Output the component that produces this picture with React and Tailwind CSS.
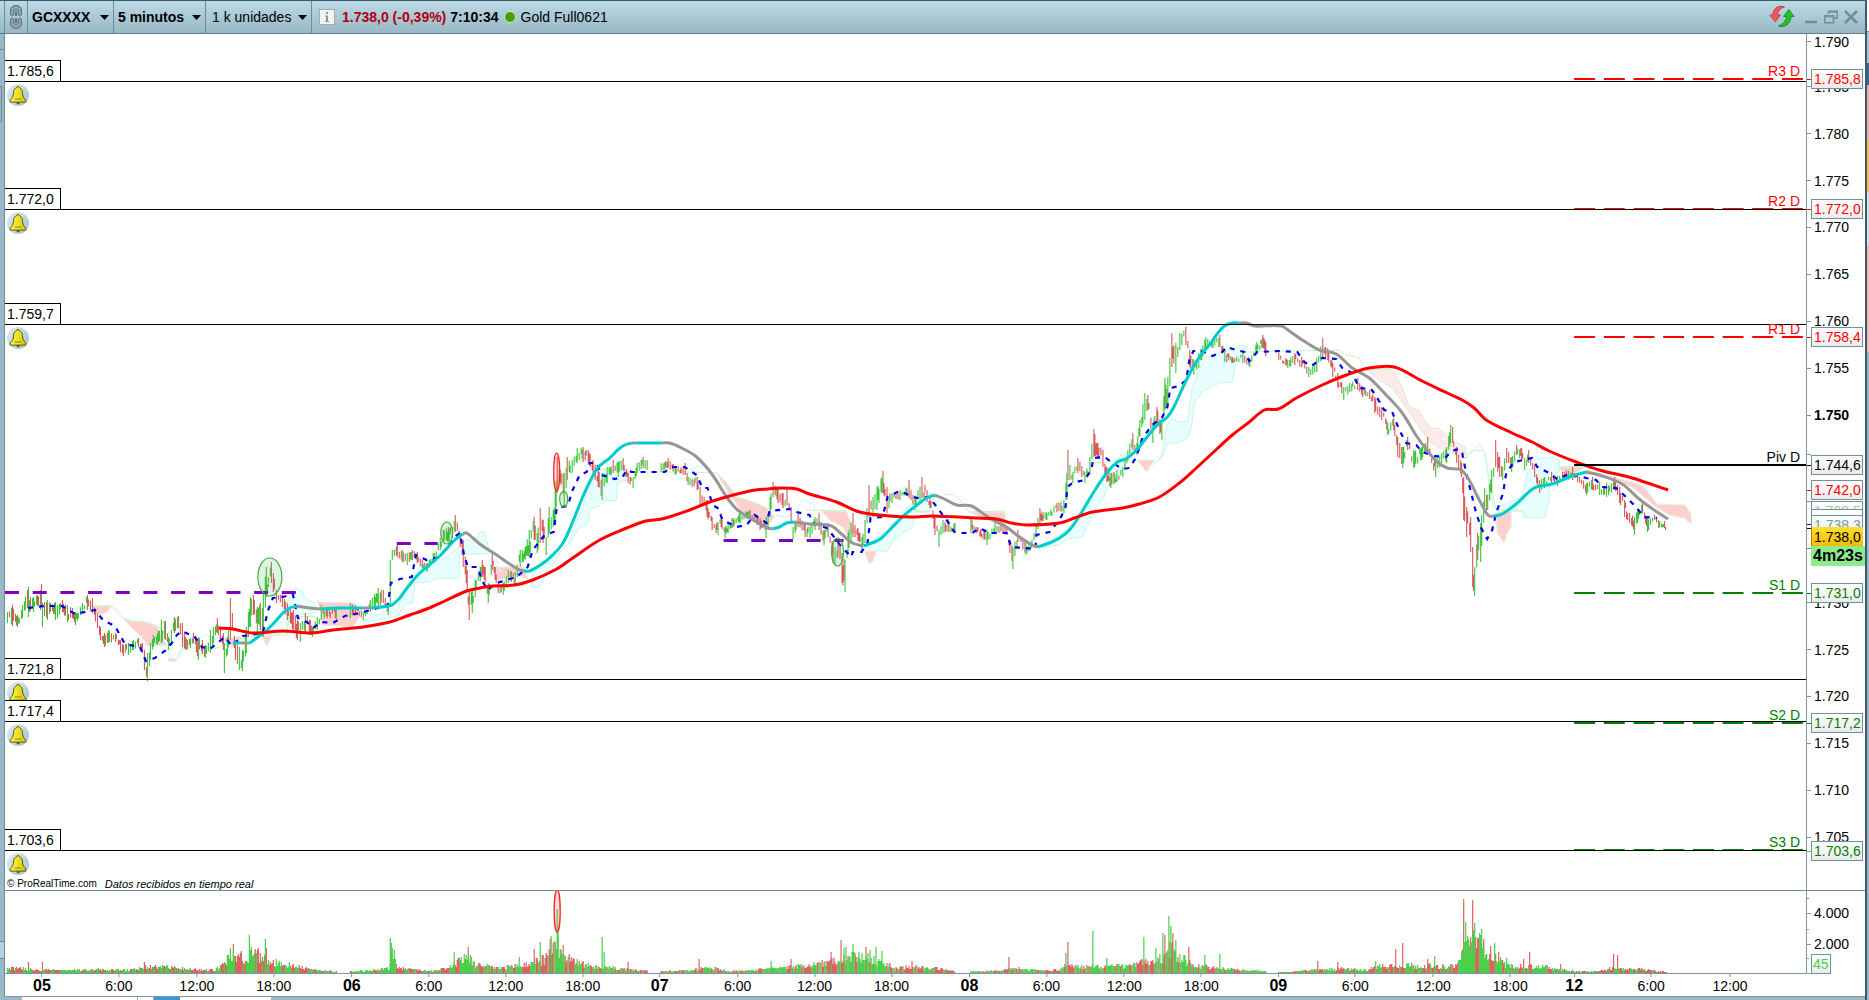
import { useMemo } from "react";
import clsx from "clsx";

// plot area in chart units
const LEFT = 5;
const RIGHT = 1807;
const TOP = 34;
const BOTTOM = 890;
const WIDTH = RIGHT - LEFT;
const HEIGHT = BOTTOM - TOP;
const VOLUME_TOP = 891;
const VOLUME_BASE = 973;

const priceToY = (price) => 415 + (1750 - price) * 9.38;
const toTop = (y) => `${((y - TOP) / HEIGHT) * 100}%`;
const toLeft = (x) => `${((x - LEFT) / WIDTH) * 100}%`;

const alerts = [
  { label: "1.785,6", y: 81 },
  { label: "1.772,0", y: 209 },
  { label: "1.759,7", y: 324 },
  { label: "1.721,8", y: 679 },
  { label: "1.717,4", y: 721 },
  { label: "1.703,6", y: 850 },
];

const pivots = [
  { name: "R3 D", y: 79, color: "#ff0000", text: "text-[#ff0000]" },
  { name: "R2 D", y: 209, color: "#ff0000", text: "text-[#ff0000]" },
  { name: "R1 D", y: 337, color: "#ff0000", text: "text-[#ff0000]" },
  { name: "Piv D", y: 465, color: "#000000", text: "text-black", solid: true },
  { name: "S1 D", y: 593, color: "#008000", text: "text-[#008000]" },
  { name: "S2 D", y: 723, color: "#008000", text: "text-[#008000]" },
  { name: "S3 D", y: 850, color: "#008000", text: "text-[#008000]" },
];

const scale = [
  1790, 1785, 1780, 1775, 1770, 1765, 1760, 1755, 1750, 1745, 1740, 1735, 1730,
  1725, 1720, 1715, 1710, 1705,
];
const hiddenScale = [1745, 1740, 1735];

const tags = [
  { label: "1.785,8", y: 79, className: "text-[#ff0000]" },
  { label: "1.772,0", y: 209, className: "text-[#ff0000]" },
  { label: "1.758,4", y: 337, className: "text-[#ff0000]" },
  { label: "1.744,6", y: 465, className: "text-black" },
  { label: "1.742,0", y: 490, className: "text-[#ff0000]" },
  { label: "1.739,5", y: 511, className: "text-[#9ccf9c]" },
  { label: "", y: 519, className: "text-[#9ccf9c]" },
  { label: "1.738,3", y: 525, className: "text-[#6f9aa6]" },
  { label: "1.731,0", y: 593, className: "text-[#008000]" },
  { label: "1.717,2", y: 723, className: "text-[#008000]" },
  { label: "1.703,6", y: 851, className: "text-[#008000]" },
];

const tickColors = [
  [79, "bg-[#ff0000]"],
  [209, "bg-[#ff0000]"],
  [337, "bg-[#ff0000]"],
  [465, "bg-black"],
  [490, "bg-[#ff0000]"],
  [524, "bg-[#0000ff]"],
  [528, "bg-black"],
  [593, "bg-[#008000]"],
  [723, "bg-[#008000]"],
  [851, "bg-[#4ccc4c]"],
];

const times = [
  [42, "05"], [119, "6:00"], [197, "12:00"], [274, "18:00"],
  [352, "06"], [429, "6:00"], [506, "12:00"], [583, "18:00"],
  [660, "07"], [738, "6:00"], [815, "12:00"], [892, "18:00"],
  [970, "08"], [1047, "6:00"], [1125, "12:00"], [1202, "18:00"],
  [1279, "09"], [1356, "6:00"], [1434, "12:00"], [1511, "18:00"],
  [1575, "12"], [1652, "6:00"], [1731, "12:00"],
];

// x, high, low
const range = [
  7,612,623, 12,605,626, 17,615,627, 22,605,618, 27,590,608, 28,587,617, 30,597,611,
  33,597,612, 37,595,606, 40,590,610, 41,584,607, 42,603,627, 44,602,616, 47,600,620,
  50,603,612, 55,602,620, 62,600,612, 67,605,622, 72,608,618, 75,612,625, 82,603,612,
  87,595,610, 92,598,613, 97,613,628, 100,627,640, 104,633,647, 108,630,643, 115,633,642,
  120,640,652, 123,645,656, 128,643,655, 133,640,650, 138,638,647, 142,643,653, 144,650,670,
  147,653,681, 150,643,660, 153,635,647, 157,633,645, 161,620,643, 165,621,640, 168,637,650,
  171,630,643, 174,617,633, 178,616,628, 182,623,647, 185,637,650, 190,638,648, 193,633,643,
  198,637,660, 202,640,654, 205,645,658, 210,630,653, 213,627,643, 217,618,633, 220,627,642,
  223,633,650, 224,643,673, 227,637,655, 230,598,640, 232,613,630, 235,640,660, 239,647,670,
  242,650,671, 246,627,653, 250,597,627, 253,595,615, 257,607,633, 260,603,630, 263,593,637,
  266,567,597, 268,577,587, 271,562,583, 273,573,592, 276,590,603, 282,593,607, 287,603,620,
  290,607,623, 293,610,633, 297,620,640, 300,623,642, 305,613,633, 310,620,635, 312,627,637,
  317,617,630, 321,605,620, 327,608,618, 336,607,619, 350,603,618, 355,605,613, 363,612,620,
  370,600,612, 378,588,607, 383,590,603, 388,603,615, 390,560,607, 392,550,560, 397,545,557,
  402,550,562, 407,553,565, 412,550,560, 417,552,563, 422,560,568, 427,563,572, 433,553,563,
  440,538,550, 443,530,543, 448,527,542, 452,527,538, 455,515,532, 460,533,547, 463,540,567,
  467,570,590, 469,590,620, 472,590,613, 475,580,597, 482,560,577, 485,567,583, 488,583,603,
  492,553,570, 495,567,580, 498,583,593, 503,583,595, 508,570,583, 515,572,585, 520,550,567,
  525,547,560, 529,530,557, 534,517,540, 537,533,553, 540,508,543, 543,520,543, 546,537,555,
  549,507,533, 553,510,527, 555,490,525, 557,457,493, 560,470,483, 564,473,507, 567,457,480,
  572,460,473, 577,448,463, 583,447,462, 588,450,463, 593,460,477, 598,470,487, 602,473,500,
  607,467,483, 613,460,473, 618,462,477, 623,458,470, 628,473,483, 633,477,488, 637,463,473,
  643,457,468, 647,460,470, 661,463,472, 668,458,468, 675,466,475, 685,463,475, 688,477,485,
  697,477,490, 700,487,505, 707,500,517, 712,517,530, 718,523,535, 721,513,527, 725,527,538,
  732,518,528, 740,513,523, 750,510,518, 757,515,525, 760,518,530, 765,522,530, 766,517,538,
  768,515,528, 770,497,517, 773,482,497, 778,487,503, 783,493,508, 787,488,505, 791,507,523,
  793,527,539, 798,513,527, 805,523,537, 810,526,538, 815,517,530, 819,513,530, 824,530,545,
  828,523,537, 833,543,563, 835,547,565, 838,540,557, 842,553,583, 845,560,592, 848,533,553,
  853,513,537, 858,528,541, 862,537,553, 865,520,543, 869,485,517, 873,497,517, 877,487,510,
  883,471,493, 887,487,513, 892,493,503, 900,490,500, 909,480,498, 915,497,510, 922,477,498,
  930,497,508, 935,517,535, 939,530,547, 943,520,533, 948,519,532, 955,523,532, 971,518,533,
  977,527,533, 987,530,545, 995,523,533, 1007,527,535, 1010,540,553, 1013,547,569, 1018,530,542,
  1026,543,555, 1032,540,548, 1036,523,537, 1040,508,523, 1047,513,520, 1057,503,512, 1064,500,513,
  1067,473,500, 1068,450,480, 1070,465,480, 1073,472,483, 1078,458,473, 1085,472,483, 1090,457,473,
  1094,429,457, 1098,443,457, 1103,450,467, 1107,467,482, 1111,473,488, 1117,470,482, 1123,467,477,
  1128,450,460, 1133,433,450, 1137,443,455, 1140,420,437, 1145,393,420, 1148,395,410, 1153,423,443,
  1157,407,427, 1162,420,440, 1165,378,410, 1168,377,407, 1172,333,367, 1176,343,373, 1180,333,350,
  1186,327,345, 1190,350,367, 1194,360,375, 1199,353,368, 1206,337,350, 1213,340,348, 1220,335,347,
  1225,350,362, 1233,357,363, 1243,353,363, 1250,358,367, 1257,342,353, 1263,335,348, 1266,342,356,
  1279,353,360, 1288,360,368, 1295,353,365, 1302,357,367, 1309,367,377, 1317,358,372, 1323,338,357,
  1328,348,360, 1333,363,377, 1338,373,387, 1344,387,400, 1350,383,392, 1358,378,390, 1363,387,397,
  1370,390,399, 1375,397,413, 1382,407,420, 1388,423,435, 1394,418,430, 1398,437,457, 1403,447,468,
  1408,437,450, 1414,450,468, 1422,447,460, 1428,437,452, 1436,457,477, 1442,453,463, 1447,447,463,
  1451,425,443, 1453,427,443, 1457,447,463, 1462,463,477, 1464,477,520, 1467,507,537, 1471,517,552,
  1473,547,587, 1475,567,596, 1478,533,560, 1481,523,562, 1485,488,513, 1488,495,510, 1492,470,493,
  1496,440,467, 1500,457,477, 1503,467,480, 1507,448,463, 1512,457,472, 1517,445,455, 1522,448,460,
  1525,458,470, 1529,450,463, 1535,465,477, 1540,480,493, 1545,477,488, 1552,472,483, 1558,476,486,
  1563,472,480, 1573,467,480, 1580,477,483, 1587,483,495, 1593,477,490, 1600,482,495, 1607,483,497,
  1615,477,490, 1620,487,503, 1625,500,517, 1630,513,523, 1635,517,535, 1638,510,523, 1643,503,513,
  1648,518,532, 1655,515,520, 1659,520,528, 1665,521,528, 1668,525,533,
];

const sessionBreaks = [[337, 349], [648, 660], [956, 970], [1267, 1278]];

// x, typical height of a volume bar
const volume = [
  7,5, 20,6, 30,4, 60,3, 100,4, 130,3, 145,7, 165,7, 180,5, 200,4, 215,4, 222,9, 230,20, 245,18,
  255,24, 262,16, 275,12, 290,9, 310,4, 335,2, 355,2, 380,4, 389,6, 392,30, 396,8, 405,5, 430,2,
  450,7, 460,14, 468,20, 475,9, 500,6, 520,9, 530,11, 545,16, 555,30, 562,20, 575,14, 590,8,
  610,6, 640,3, 665,2, 690,3, 700,5, 715,6, 730,2, 760,4, 775,7, 800,8, 820,10, 835,14, 850,18,
  865,18, 880,14, 895,6, 915,7, 940,5, 955,2, 975,2, 1000,3, 1015,5, 1040,3, 1060,4, 1067,10,
  1080,7, 1095,7, 1115,8, 1130,8, 1140,11, 1155,14, 1163,18, 1168,28, 1175,26, 1180,18, 1190,12,
  1200,8, 1215,6, 1235,4, 1265,2, 1285,1, 1305,3, 1325,4, 1345,5, 1365,3, 1380,8, 1400,10,
  1415,8, 1430,8, 1450,7, 1460,12, 1465,34, 1475,38, 1485,30, 1495,18, 1505,10, 1515,7, 1530,8,
  1545,7, 1560,4, 1575,2, 1600,2, 1615,6, 1625,5, 1640,5, 1650,3, 1668,1,
];

// x, height, 1 = up bar
const spikes = [
  [28,11,0],[42,11,0],[144,11,0],[230,25,1],[233,29,0],[249,38,1],[251,26,1],[265,34,1],[266,25,0],
  [390,35,1],[391,30,1],[454,21,1],[468,26,0],[519,16,1],[534,24,0],[540,31,1],[550,34,0],
  [551,37,1],[557,64,1],[558,41,1],[563,28,0],[602,36,1],[604,21,1],[628,11,0],[699,14,0],[771,12,1],
  [791,14,0],[831,21,0],[841,33,0],[844,25,1],[846,26,1],[853,29,1],[866,26,0],[870,23,1],[876,26,1],
  [882,22,1],[912,12,0],[1009,16,0],[1066,20,1],[1068,31,0],[1093,42,1],[1107,15,1],[1144,36,1],
  [1156,25,1],[1163,40,1],[1165,38,0],[1169,57,1],[1171,47,1],[1173,40,0],[1176,33,1],[1189,26,0],
  [1205,18,1],[1220,19,1],[1318,12,0],[1338,11,0],[1376,12,1],[1396,24,0],[1403,30,0],[1428,14,0],
  [1435,17,1],[1464,74,0],[1466,51,1],[1471,36,0],[1473,73,0],[1475,50,1],[1482,44,1],[1484,34,0],
  [1495,30,1],[1499,21,0],[1530,21,0],[1524,14,0],[1507,15,1],[1561,9,0],[1614,19,0],[1618,18,0],
];

const slowAverage =
  "219,628 233,629 253,633 283,631 312,633 333,630 363,627 390,622 410,615 427,609 445,601 467,591 480,588 493,586 515,585 533,580 557,569 573,558 600,540 627,528 646,521 662,519 690,510 713,501 750,491 768,489 783,488 797,489 810,494 837,502 860,512 890,516 913,517 933,516 977,518 997,519 1012,523 1027,525 1060,523 1075,518 1093,512 1123,508 1140,504 1160,497 1180,483 1197,468 1210,456 1233,435 1250,422 1265,410 1279,409 1297,398 1323,385 1347,375 1370,368 1395,367 1423,381 1448,393 1463,400 1475,408 1487,420 1513,433 1533,442 1550,451 1577,462 1600,470 1633,478 1669,490";

const averageRising = [
  "233,643 240,643",
  "250,643 258,637 265,632 275,622 283,613 290,608 297,606",
  "322,609 337,608 363,608",
  "372,608 392,605 400,598 405,591 412,582 420,573 440,556 455,540 463,534",
  "524,571 530,571 545,562 555,553 562,545 567,536 575,517 583,497 590,482 598,468 610,458 618,450 625,445 632,443",
  "637,443 662,443",
  "773,529 780,527 787,523 795,522",
  "864,546 875,542 882,538 890,530 905,515 920,503 927,498 935,495",
  "1038,547 1050,543 1060,538 1070,530 1080,516 1095,491 1108,472 1118,462 1128,458 1138,449 1147,438 1155,428 1160,423 1168,417 1175,406 1187,380 1200,357 1210,345 1217,335 1225,326 1233,323 1240,323",
  "1495,516 1503,514 1517,504 1535,488 1553,484 1573,476 1587,472",
];

const averageFalling = [
  "240,643 250,643",
  "297,606 310,608 322,609",
  "363,608 372,608",
  "463,534 467,533 480,544 497,555 510,564 520,570 524,571",
  "632,443 637,443",
  "662,443 670,443 682,448 697,457 713,475 727,497 738,510 757,522 768,528 773,529",
  "795,522 810,524 832,526 842,534 853,543 864,546",
  "935,495 945,499 957,505 972,506 990,518 1007,527 1020,537 1033,545 1040,547",
  "1240,323 1247,323 1255,326 1282,326 1290,331 1303,340 1320,350 1337,354 1353,368 1370,378 1387,395 1403,413 1418,437 1430,453 1438,462 1448,468 1462,470 1470,480 1478,496 1486,511 1490,516 1495,516",
  "1587,472 1600,475 1623,484 1640,499 1655,510 1669,519",
];

const fastAverage =
  "28,608 45,606 62,606 75,614 95,610 103,620 115,626 125,644 140,647 146,661 155,658 165,651 172,643 177,635 182,631 195,637 202,647 210,649 220,641 225,637 232,646 243,636 263,633 268,611 273,598 283,597 293,594 298,618 307,622 313,628 322,622 333,623 345,616 360,613 378,608 388,605 391,583 400,579 412,577 416,555 427,560 440,557 455,537 460,533 464,553 468,567 478,567 482,580 488,590 497,583 517,577 528,567 533,550 545,535 554,532 557,508 568,506 573,490 580,475 587,472 590,463 597,463 602,475 615,479 623,477 627,470 632,472 665,472 672,467 685,467 697,475 703,488 708,488 713,505 718,508 723,520 737,527 747,525 755,515 767,523 770,511 790,509 797,512 810,515 813,523 827,528 833,535 842,547 852,557 853,552 862,552 868,543 871,518 883,517 888,497 900,491 917,498 930,497 938,508 947,520 955,532 960,533 973,533 980,528 990,533 1007,533 1012,547 1036,549 1037,535 1050,532 1060,520 1066,508 1068,487 1073,483 1085,480 1092,470 1094,458 1105,457 1112,462 1123,469 1130,468 1137,457 1143,438 1153,425 1163,417 1168,407 1171,388 1180,386 1187,380 1190,360 1194,351 1202,351 1213,356 1223,352 1227,347 1237,350 1245,352 1250,361 1258,352 1280,351 1298,352 1305,362 1312,366 1323,358 1337,359 1343,368 1353,373 1360,388 1372,389 1378,398 1385,410 1393,412 1400,430 1407,443 1417,445 1423,452 1435,456 1447,457 1452,451 1460,449 1463,453 1467,473 1472,493 1477,513 1482,528 1488,539 1493,530 1497,513 1504,493 1507,473 1515,462 1533,458 1538,467 1548,472 1558,479 1570,474 1587,478 1597,480 1603,487 1617,488 1627,497 1637,507 1645,517 1658,518";

const cloudUp = [
  "295,587 303,592 305,598 315,603 317,612 289,617 287,632 270,635 280,615",
  "363,621 393,608 397,611 405,590 422,565 433,562 447,557 467,540 477,540 480,532 485,532 490,553 460,555 459,578 435,579 430,582 415,583 413,603 405,605 398,616 367,622",
  "530,578 545,560 555,556 568,545 573,530 583,508 590,478 597,470 613,468 622,462 627,480 618,483 617,500 605,501 598,507 590,509 588,523 578,530 572,541 562,550 555,562 547,570 541,586 533,588",
  "867,547 875,538 890,530 897,518 915,500 928,492 935,495 930,512 917,513 913,527 905,532 893,542 888,551 870,551",
  "1040,548 1063,533 1077,520 1088,500 1100,483 1112,470 1123,453 1128,463 1118,477 1108,487 1105,497 1097,507 1088,527 1083,537 1067,539 1060,545",
  "1153,465 1162,457 1165,440 1168,425 1173,418 1180,422 1188,421 1193,387 1200,370 1207,357 1220,353 1233,350 1240,345 1248,347 1245,353 1237,360 1233,382 1220,383 1203,392 1195,403 1192,428 1188,438 1178,443 1168,443 1163,457",
  "1497,508 1515,500 1523,497 1528,473 1537,460 1545,457 1560,460 1561,470 1550,480 1550,500 1546,518 1525,518 1523,511 1510,511",
];

const cloudDown = [
  "92,606 112,606 107,612 100,615 95,613",
  "123,618 132,621 145,622 158,627 163,640 167,644 160,646 147,645 142,637 132,628",
  "168,658 177,659 175,662 169,661",
  "219,638 233,638 243,635 233,647 227,642",
  "262,636 272,636 267,646",
  "317,600 320,602 355,603 360,617 353,627 322,625 320,610",
  "492,567 525,567 528,579 517,575 498,581",
  "717,473 727,483 737,497 748,500 767,508 775,517 767,527 743,513 727,490",
  "822,511 847,511 853,527 858,533 848,535 843,527 830,520",
  "865,551 877,551 873,562 869,563",
  "970,512 1005,512 1007,528 987,520 977,515",
  "1138,460 1155,460 1147,472",
  "1497,512 1512,511 1512,527 1508,533 1505,543 1498,533",
  "1560,467 1587,467 1567,478",
  "1587,470 1633,482 1645,487 1658,504 1686,505 1692,514 1692,524 1685,518 1670,515 1657,507 1633,487",
];

const cloudFaint =
  "1368,370 1393,368 1403,387 1410,407 1420,410 1425,420 1432,428 1441,429 1453,440 1466,447 1467,459 1440,448 1430,442 1413,417 1393,388 1380,380";

const paleGreen = [
  "77,607 92,606 112,606 123,618 132,621 145,622 158,626 165,634 170,632",
  "177,658 182,648 217,648 243,638 262,635 287,635 289,617 315,616",
  "647,472 690,472 717,473 727,483 737,497 748,500 767,508",
  "680,478 700,478",
  "807,510 847,511",
  "913,512 930,511 945,495 953,494 960,500 970,512 1005,511 1007,533",
  "1088,463 1140,460",
  "1245,352 1340,350 1345,354 1360,358 1366,368 1393,369",
  "1466,459 1475,450 1485,451 1490,480 1497,510 1523,511",
  "1560,467 1587,466 1600,470",
];

const paleCyan = [
  "52,605 70,609 95,608",
  "135,633 147,646 165,645 172,660 178,660 185,645 197,640 205,635 217,640 230,645",
  "490,560 497,560 500,572",
  "613,462 624,461",
  "690,470 700,466 712,472",
  "775,515 785,517 797,512 802,500 808,501 815,505 815,512",
  "1465,455 1475,450 1480,444 1487,455 1490,490 1495,508",
];

const ellipses = [
  { cx: 270, cy: 577, rx: 12, ry: 19, color: "#3fae3f" },
  { cx: 447, cy: 533, rx: 6, ry: 11, color: "#3fae3f" },
  { cx: 564, cy: 499, rx: 4, ry: 8, color: "#3fae3f" },
  { cx: 838, cy: 552, rx: 6, ry: 14, color: "#3fae3f" },
  { cx: 557, cy: 472, rx: 3, ry: 19, color: "#ff2020" },
];

// Catmull-Rom curve through the given points
const toCurve = (points) => {
  const p = points.split(" ").map((pair) => pair.split(",").map(Number));
  let d = `M${p[0][0]} ${p[0][1]}`;
  for (let i = 0; i < p.length - 1; i++) {
    const before = p[i - 1] || p[i];
    const after = p[i + 2] || p[i + 1];
    const step = (p[i + 1][0] - p[i][0]) / 3;
    const slopeIn = (p[i + 1][1] - before[1]) / (p[i + 1][0] - before[0]);
    const slopeOut = (after[1] - p[i][1]) / (after[0] - p[i][0]);
    d += `C${(p[i][0] + step).toFixed(1)} ${(p[i][1] + slopeIn * step).toFixed(1)} `;
    d += `${(p[i + 1][0] - step).toFixed(1)} ${(p[i + 1][1] - slopeOut * step).toFixed(1)} `;
    d += `${p[i + 1][0]} ${p[i + 1][1]}`;
  }
  return d;
};

const createRandom = (seed) => {
  let value = seed;
  return () => {
    value = (value * 1103515245 + 12345) % 2147483648;
    return value / 2147483648;
  };
};

const isClosed = (x) => sessionBreaks.some(([from, to]) => x >= from && x <= to);

const buildCandles = () => {
  const random = createRandom(29);
  let up = "";
  let down = "";
  let next = 0;
  for (let i = 0; i + 3 < range.length; i += 3) {
    const [x0, high0, low0, x1, high1, low1] = range.slice(i, i + 6);
    for (let x = x0; x < x1; x++) {
      if (isClosed(x) || (x < next && x !== x0)) continue;
      next = x + (random() > 0.35 ? 2 : 1);
      const t = (x - x0) / (x1 - x0);
      const high = high0 + (high1 - high0) * t;
      const low = low0 + (low1 - low0) * t;
      const size = (low - high) * (x === x0 ? 1 : 0.3 + random() * 0.6);
      const start = high + random() * (low - high - size);
      const trend = (high0 + low0 - high1 - low1) / 24;
      const bar = `M${x + 0.5} ${start.toFixed(1)}v${Math.max(size, 3).toFixed(1)}`;
      if (random() + trend > 0.45) up += bar;
      else down += bar;
    }
  }
  return { up, down };
};

const buildVolume = () => {
  const random = createRandom(11);
  let up = "";
  let down = "";
  for (let i = 0; i + 2 < volume.length; i += 2) {
    const [x0, h0, x1, h1] = volume.slice(i, i + 4);
    let green = random() > 0.45;
    for (let x = x0; x < x1; x++) {
      if (isClosed(x)) continue;
      if (random() > 0.7) green = !green;
      const base = h0 + ((h1 - h0) * (x - x0)) / (x1 - x0);
      const height = Math.max(1, Math.round(base * (0.5 + random() * 0.7)));
      const bar = `M${x + 0.5} ${VOLUME_BASE}v-${height}`;
      if (green) up += bar;
      else down += bar;
    }
  }
  spikes.forEach(([x, height, isUp]) => {
    const bar = `M${x + 0.5} ${VOLUME_BASE}v-${height}`;
    if (isUp) up += bar;
    else down += bar;
  });
  return { up, down };
};

const BellIcon = () => (
  <svg viewBox="0 0 22 22" className="block size-[22px]" aria-hidden="true">
    <defs>
      <linearGradient id="bell-bg" x1="0" y1="0" x2="1" y2="1">
        <stop offset="0" stopColor="#e4eef3" />
        <stop offset="1" stopColor="#9fbdcb" />
      </linearGradient>
      <linearGradient id="bell-fill" x1="0" y1="0" x2="1" y2="0">
        <stop offset="0" stopColor="#fff75a" />
        <stop offset="1" stopColor="#d8c800" />
      </linearGradient>
    </defs>
    <circle cx="11" cy="11" r="11" fill="url(#bell-bg)" />
    <path d="M9.600 18.200h3v1.200l-1.500 1.200-1.500-1.200z" fill="#5f5a00" />
    <path
      d="M11 2.500c1 0 1.500.5 1.600 1.300 2.100.9 2.800 2.700 2.900 5.200.1 2.900.9 4.700 3.300 7.100v2H3.200v-2c2.400-2.400 3.200-4.200 3.300-7.100.1-2.500.8-4.300 2.900-5.200.1-.8.600-1.300 1.600-1.300z"
      fill="url(#bell-fill)"
      stroke="#5f5a00"
      strokeWidth="1"
    />
    <path d="M7.500 15h7" stroke="#8a8200" strokeWidth="1" />
  </svg>
);

const LinkIcon = () => (
  <svg viewBox="0 0 14 26" className="h-[26px] w-[14px]" aria-hidden="true">
    <g fill="#8fa4ae" stroke="#566f7b" strokeWidth="1">
      <path d="M1.500 10V6a5.500 4.500 0 0 1 11 0v4c0 2.400-3.500 2.400-3.500 0V7c0-1.800-4-1.800-4 0v3c0 2.400-3.500 2.400-3.500 0z" />
      <path d="M1.500 16v4a5.500 4.500 0 0 0 11 0v-4c0-2.400-3.500-2.400-3.500 0v3c0 1.800-4 1.800-4 0v-3c0-2.400-3.500-2.400-3.500 0z" />
    </g>
    <path d="M7 7.500V12M7 14v4.500" stroke="#566f7b" strokeWidth="1.800" />
  </svg>
);

const RefreshIcon = () => (
  <svg viewBox="0 0 26 24" className="h-6 w-[26px]" aria-hidden="true">
    <path
      d="M15.500 2C9-.5 4 3.500 3.800 10H.800l5.400 7 5.200-7H8.600c.2-4 2.400-6.500 6.900-8z"
      fill="#f4555a"
      stroke="#b8383c"
      strokeWidth="0.800"
    />
    <path
      d="M9.500 21c6.500 2.200 12.200-2.500 12.500-9.500h3L19.800 4.500 14.500 11.500h2.900c-.2 4.500-3.200 7.700-7.900 9.500z"
      fill="#1fc62a"
      stroke="#0e7d17"
      strokeWidth="0.800"
    />
  </svg>
);

const Dropdown = ({ label, value, className }) => (
  <label className="flex h-full items-center border-r border-[#6d8c9b] px-1">
    <span className="sr-only">{label}</span>
    <select
      defaultValue={value}
      className={clsx("h-6 appearance-none bg-transparent p-0 text-sm text-black outline-none", className)}
    >
      <option>{value}</option>
    </select>
    <svg viewBox="0 0 9 5" className="pointer-events-none h-[5px] w-[9px]" aria-hidden="true">
      <path d="M0 0h9L4.500 5z" fill="#000" />
    </svg>
  </label>
);

const Header = () => (
  <header className="flex h-[34px] shrink-0 items-center border-t border-b border-t-[#3d5866] border-b-[#5f7e8d] bg-linear-to-b from-[#bcdae6] to-[#99b8c5] pl-1">
    <button
      type="button"
      aria-label="Vincular"
      className="flex h-full w-6 items-center justify-center border-l border-r border-[#6d8c9b]"
    >
      <LinkIcon />
    </button>
    <Dropdown label="Valor" value="GCXXXX" className="w-[68px] font-bold" />
    <Dropdown label="Intervalo" value="5 minutos" className="w-[74px] font-bold" />
    <Dropdown label="Unidades" value="1 k unidades" className="w-[88px] pl-[2px]" />
    <button
      type="button"
      aria-label="Información"
      className="ml-[7px] flex size-4 items-center justify-center border border-[#a9a9a9] bg-[#f4f4f4]"
    >
      <svg viewBox="0 0 8 12" className="h-3 w-2" aria-hidden="true">
        <path d="M3 1h2v2H3zM2 4.500h3V10h1.200v1H1.800v-1H3V5.500H2z" fill="#8b979d" />
      </svg>
    </button>
    <p className="ml-[7px] flex items-center gap-1 text-sm whitespace-nowrap">
      <strong className="text-[#b00010]">1.738,0 (-0,39%)</strong>
      <strong>7:10:34</strong>
      <span className="mx-px size-3 rounded-full border border-[#d4ecc4] bg-[#4aa000]" />
      <span>Gold Full0621</span>
    </p>
    <div className="ml-auto flex items-center pr-[7px]">
      <button type="button" aria-label="Actualizar" className="mr-[9px]">
        <RefreshIcon />
      </button>
      <button type="button" aria-label="Minimizar" className="mr-[6px]">
        <svg viewBox="0 0 14 14" className="size-[14px]">
          <path d="M1 12h12" stroke="#738c98" strokeWidth="2.500" />
        </svg>
      </button>
      <button type="button" aria-label="Restaurar" className="mr-[6px]">
        <svg viewBox="0 0 14 14" className="size-[14px]" fill="none" stroke="#738c98" strokeWidth="1.500">
          <path d="M4.500 4V1.200h8.700v7H10" />
          <path d="M4 2h9.500" />
          <path d="M.800 5.800h8.700v7H.800z" />
          <path d="M.800 6.500h8.700" />
        </svg>
      </button>
      <button type="button" aria-label="Cerrar">
        <svg viewBox="0 0 14 14" className="size-[14px]">
          <path d="M1 1l12 12M13 1L1 13" stroke="#738c98" strokeWidth="2.500" />
        </svg>
      </button>
    </div>
  </header>
);

const PriceChart = () => {
  const candles = useMemo(buildCandles, []);

  return (
    <section aria-label="Gráfico de precios" className="relative min-w-0 flex-1 overflow-hidden">
      <svg
        viewBox={`${LEFT} ${TOP} ${WIDTH} ${HEIGHT}`}
        preserveAspectRatio="none"
        className="absolute inset-0 size-full"
        fill="none"
      >
        {cloudUp.map((points) => (
          <polygon key={points} points={points} fill="#e8fefe" stroke="#c8f5e6" />
        ))}
        {cloudDown.map((points) => (
          <polygon key={points} points={points} fill="#fdcfcf" stroke="#e8f0dc" />
        ))}
        <polygon points={cloudFaint} fill="#feeaea" stroke="#d3f3d3" />
        {paleGreen.map((points) => (
          <polyline key={points} points={points} stroke="#c3f7bd" />
        ))}
        {paleCyan.map((points) => (
          <polyline key={points} points={points} stroke="#c6f8fa" />
        ))}

        <path d={candles.down} stroke="#d65858" strokeWidth="1.100" />
        <path d={candles.up} stroke="#38c638" strokeWidth="1.100" />

        <g stroke="#8000c0" strokeWidth="3" strokeDasharray="14 13.700">
          <path d="M5 592.500H296" />
          <path d="M397 543.500H438" />
          <path d="M724 540.500H844" />
        </g>

        <polyline points={fastAverage} stroke="#0000f0" strokeWidth="2.200" strokeDasharray="5 6" />
        {averageFalling.map((points) => (
          <path key={points} d={toCurve(points)} stroke="#969696" strokeWidth="3" />
        ))}
        {averageRising.map((points) => (
          <path key={points} d={toCurve(points)} stroke="#00cccc" strokeWidth="3" />
        ))}
        <path d={toCurve(slowAverage)} stroke="#ff0000" strokeWidth="3" strokeLinejoin="round" />

        {ellipses.map(({ color, ...shape }) => (
          <ellipse key={shape.cx} {...shape} fill={color} fillOpacity="0.160" stroke={color} strokeWidth="1.200" />
        ))}

        {pivots.map(({ name, y, color, solid }) => (
          <path
            key={name}
            d={`M1575 ${y}H${RIGHT}`}
            stroke={color}
            strokeWidth="2"
            strokeDasharray={solid ? undefined : "21 8.700"}
          />
        ))}
        {alerts.map(({ label, y }) => (
          <path key={label} d={`M${LEFT} ${y + 0.5}H${RIGHT}`} stroke="#000" />
        ))}
      </svg>

      {pivots.map(({ name, y, text }) => (
        <span
          key={name}
          className={clsx("absolute right-[6px] -translate-y-4 text-sm/4", text)}
          style={{ top: toTop(y) }}
        >
          {name}
        </span>
      ))}

      {alerts.map(({ label, y }) => (
        <div key={label} className="absolute left-0 -translate-y-5" style={{ top: toTop(y - 1) }}>
          <div className="flex h-[22px] w-14 items-center border-t border-r border-b border-black bg-white pl-[2px] text-sm">
            {label}
          </div>
          <button type="button" aria-label={`Alerta ${label}`} className="mt-[2px] ml-[2px] block">
            <BellIcon />
          </button>
        </div>
      ))}

      <p className="absolute bottom-0 left-[2px] flex items-center gap-2 text-[11px]/3 whitespace-nowrap">
        <span className="text-[10px]/3">© ProRealTime.com</span>
        <em>Datos recibidos en tiempo real</em>
      </p>
    </section>
  );
};

const PriceScale = () => (
  <aside
    aria-label="Escala de precios"
    className="relative w-[59px] shrink-0 overflow-hidden border-l border-[#7f9aa6] text-sm/4"
  >
    {scale.map((price) => {
      const y = priceToY(price);
      return (
        <div
          key={price}
          className="absolute left-0 flex -translate-y-2 items-center gap-[3px]"
          style={{ top: toTop(price === 1790 ? y + 2 : y) }}
        >
          <span className="h-px w-1 bg-[#7f9aa6]" />
          {!hiddenScale.includes(price) && (
            <span className={clsx(price === 1750 && "font-bold")}>
              {(price / 1000).toFixed(3)}
            </span>
          )}
        </div>
      );
    })}
    {tickColors.map(([y, color]) => (
      <span key={y} className={clsx("absolute left-0 h-px w-1", color)} style={{ top: toTop(y) }} />
    ))}
    {tags.map(({ label, y, className }) => (
      <div
        key={y}
        className={clsx(
          "absolute left-1 flex h-5 w-[52px] -translate-y-[10px] items-center border border-[#738f9c] bg-linear-to-b from-white to-[#ebebeb] pl-[2px]",
          className
        )}
        style={{ top: toTop(y) }}
      >
        {label}
      </div>
    ))}
    <div
      className="absolute right-0 left-1 flex -translate-y-[10px] flex-col"
      style={{ top: toTop(537) }}
    >
      <span className="flex h-[19px] w-[52px] items-center border-l border-[#b08800] bg-linear-to-b from-[#ffdf30] to-[#f2bb00] pl-[2px]">
        1.738,0
      </span>
      <strong className="flex h-5 items-center bg-[#8ceb8c] pl-[2px] text-base/5">4m23s</strong>
    </div>
  </aside>
);

const VolumeChart = () => {
  const bars = useMemo(buildVolume, []);

  return (
    <section aria-label="Volumen" className="flex h-[84px] shrink-0 border-t border-[#6f8e9b]">
      <div className="min-w-0 flex-1 border-b border-[#7a97a3]">
        <svg
          viewBox={`${LEFT} ${VOLUME_TOP} ${WIDTH} ${VOLUME_BASE - VOLUME_TOP}`}
          preserveAspectRatio="none"
          className="block size-full"
          fill="none"
        >
          <path d={bars.down} stroke="#de6262" strokeWidth="1.200" />
          <path d={bars.up} stroke="#4ad04a" strokeWidth="1.200" />
          <ellipse cx="557.500" cy="911" rx="3" ry="21" fill="#ff2020" fillOpacity="0.160" stroke="#f03030" strokeWidth="1.400" />
        </svg>
      </div>
      <div className="relative w-[59px] shrink-0 border-l border-[#7f9aa6] text-sm/4">
        {[7, 38, 67].map((y) => (
          <span key={y} className="absolute left-0 h-px w-[2px] bg-[#7f9aa6]" style={{ top: y }} />
        ))}
        <div className="flex flex-col gap-[15px] pt-[14px]">
          {["4.000", "2.000"].map((label) => (
            <div key={label} className="flex items-center gap-[3px]">
              <span className="h-px w-1 bg-[#7f9aa6]" />
              {label}
            </div>
          ))}
        </div>
        <span className="absolute bottom-0 left-0 h-px w-1 bg-[#4ccc4c]" />
        <div className="absolute bottom-0 left-1 flex h-5 w-5 items-center border border-[#738f9c] bg-linear-to-b from-white to-[#ebebeb] pl-px text-[#4ccc4c]">
          45
        </div>
      </div>
    </section>
  );
};

const TimeScale = () => (
  <div className="flex h-[22px] shrink-0">
    <div className="relative min-w-0 flex-1 text-sm/4">
      {times.map(([x, label]) => (
        <div
          key={x}
          className="absolute top-0 flex -translate-x-1/2 flex-col items-center"
          style={{ left: toLeft(x) }}
        >
          <span className="h-[3px] w-px bg-[#7a97a3]" />
          <time className={clsx("mt-px", label.length === 2 && "text-base/4 font-bold")}>{label}</time>
        </div>
      ))}
    </div>
    <div className="w-[59px] shrink-0" />
  </div>
);

const App = () => {
  return (
    <div className="flex h-screen overflow-hidden bg-[#9ab8c6] font-['Liberation_Sans',Arial,sans-serif] text-black">
      <div className="flex min-w-0 flex-1 flex-col">
        <Header />
        <div className="flex min-h-0 flex-1">
          <div className="flex w-[5px] shrink-0 flex-col border-r border-[#6d8c9b] bg-[#9ab8c6]">
            <div className="h-4 border-b border-[#6d8c9b]" />
            <div className="mt-9 h-9 w-[2px] border-y border-r border-[#6d8c9b]" />
            <div className="mt-auto mb-[38px] h-[18px] border-y border-[#6d8c9b] bg-[#b4d2df]" />
          </div>
          <main className="flex min-w-0 flex-1 flex-col border-b border-[#7a97a3] bg-white">
            <div className="flex min-h-0 flex-1">
              <PriceChart />
              <PriceScale />
            </div>
            <VolumeChart />
            <TimeScale />
          </main>
        </div>
        <footer className="flex h-[3px] shrink-0 pl-[22px]">
          <div className="w-[115px] bg-white" />
          <div className="ml-px w-[15px] bg-white" />
          <div className="ml-px w-[26px] bg-[#3599dc]" />
          <div className="w-[91px] bg-white" />
        </footer>
      </div>
      <div className="w-[2px] shrink-0 bg-[#3f5b69]" />
      {/* edge of the neighbouring window */}
      <div className="flex w-[2px] shrink-0 flex-col">
        <div className="h-[31px] bg-white" />
        <div className="h-8 border-t border-[#6d8c9b] bg-[#a5c8d4]" />
        <div className="h-[22px] bg-[#386292]" />
        <div className="h-[54px] bg-[#e8b0b4]" />
        <div className="h-[53px] bg-[#f5bd58]" />
        <div className="h-[54px] bg-[#cfe3ec]" />
        <div className="h-[106px] bg-[#efb6b8]" />
        <div className="flex-1 bg-[#9ab8c6]" />
      </div>
    </div>
  );
};

export default App;
